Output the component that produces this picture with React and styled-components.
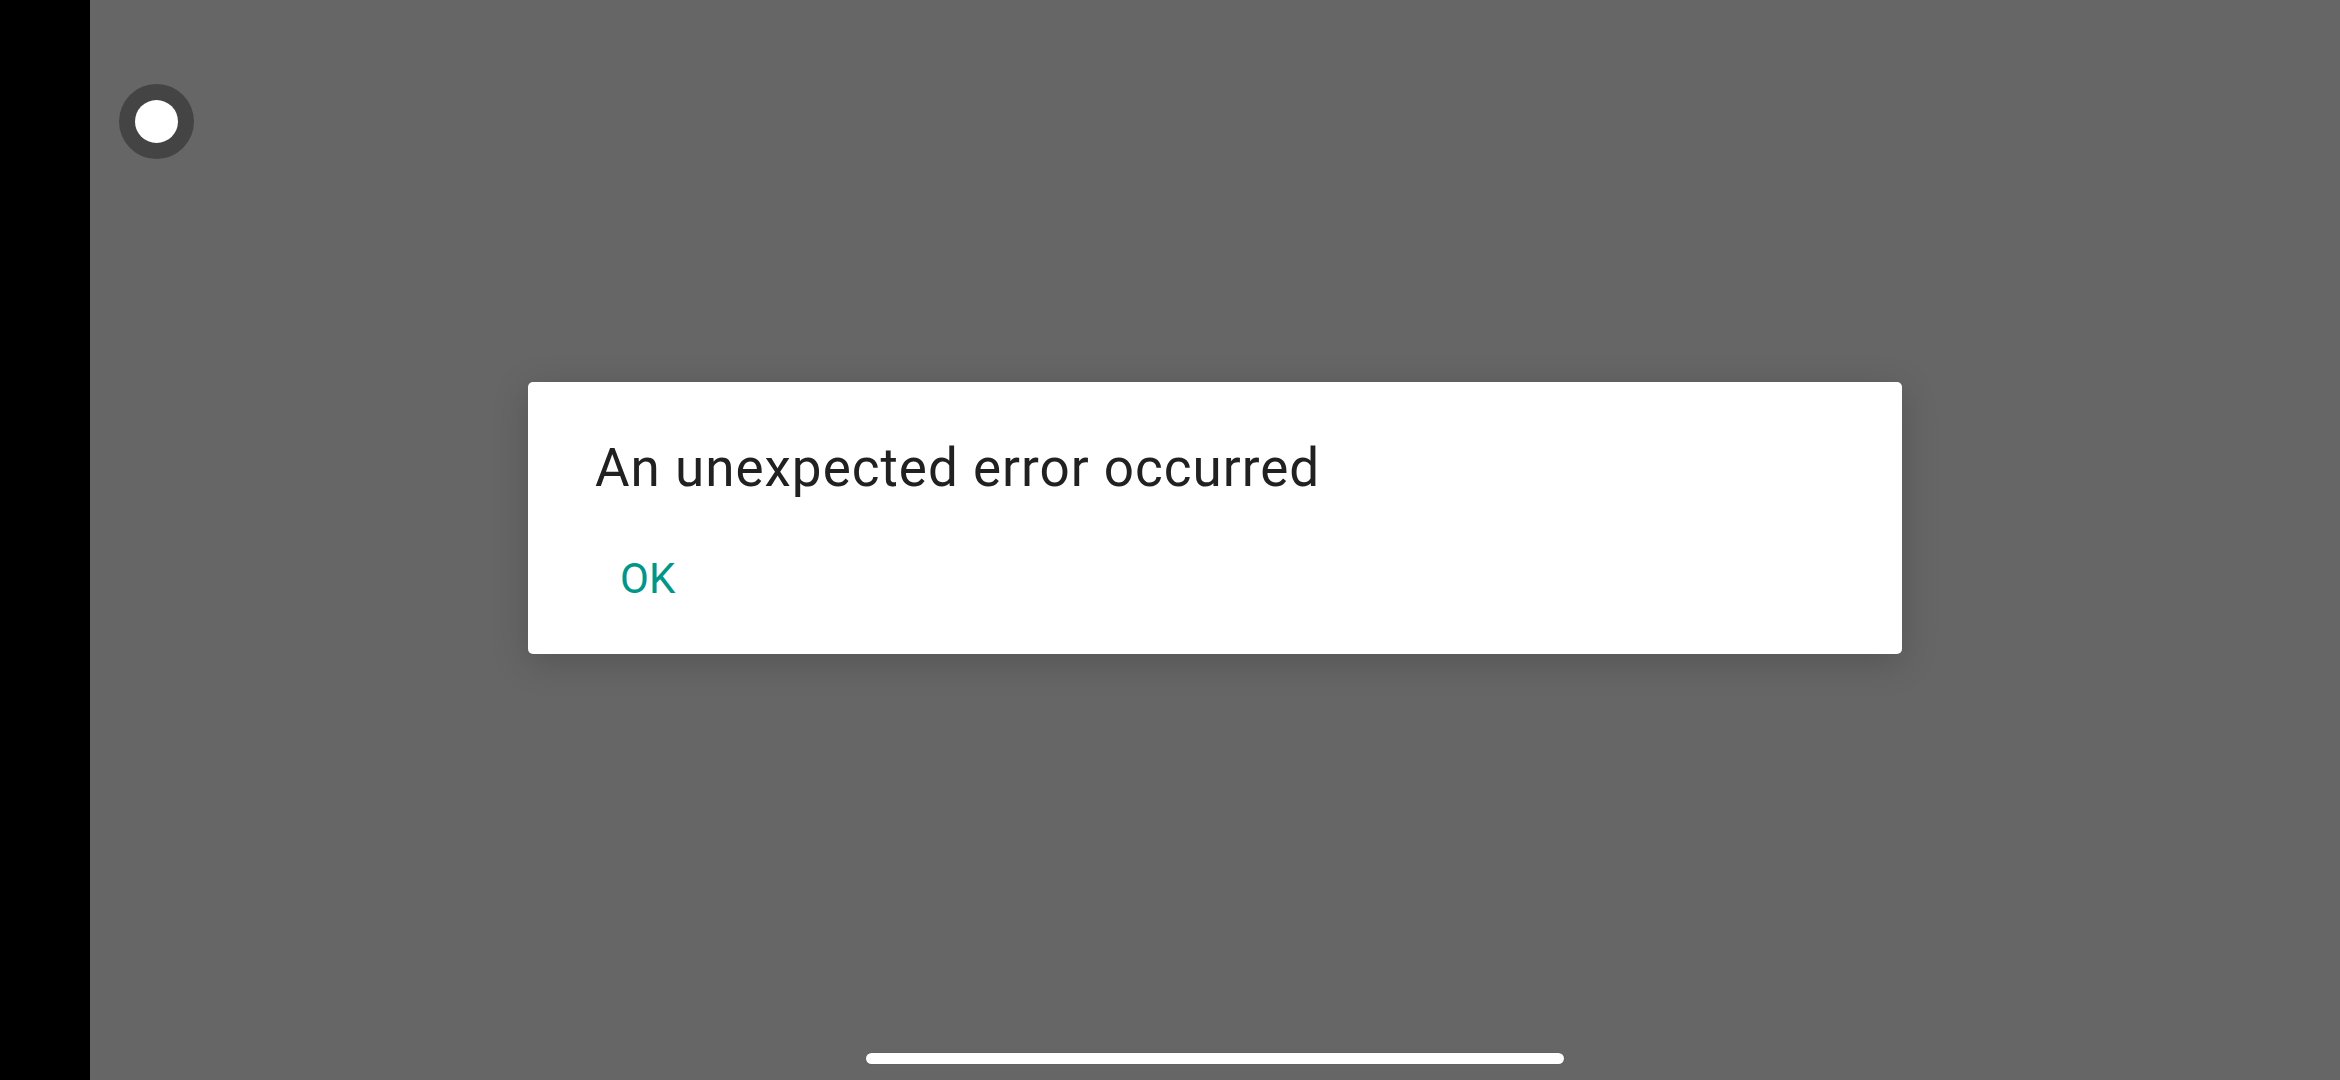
import React from "react";
import styled, { createGlobalStyle } from "styled-components";

const Global = createGlobalStyle`
  html, body { margin: 0; padding: 0; background: #666666; }
  body { font-family: Roboto, "Liberation Sans", sans-serif; }
  #root { width: 2340px; height: 1080px; }
`;

const Screen = styled.div`
  display: flex;
  width: 2340px;
  height: 1080px;
  overflow: hidden;
`;

const SideStrip = styled.div`
  width: 90px;
  flex: none;
  background: #000;
`;

const Content = styled.main`
  position: relative;
  flex: 1;
  display: flex;
  flex-direction: column;
  align-items: center;
  padding-top: 382px;
  background: #666666;
`;

const FloatingBall = styled.div`
  position: absolute;
  left: 29px;
  top: 84px;
  width: 75px;
  height: 75px;
  border-radius: 50%;
  background: #444444;
  display: flex;
  align-items: center;
  justify-content: center;
`;

const BallDot = styled.div`
  width: 43px;
  height: 43px;
  border-radius: 50%;
  background: #ffffff;
`;

const Dialog = styled.div`
  width: 1374px;
  box-sizing: border-box;
  background: #ffffff;
  border-radius: 5px;
  box-shadow: 0 8px 36px rgba(0, 0, 0, 0.18);
  padding: 54px 67px 38px;
  display: flex;
  flex-direction: column;
  gap: 40px;
`;

const Title = styled.h2`
  margin: 0;
  font-family: Roboto, "Liberation Sans", sans-serif;
  font-weight: 400;
  font-size: 53px;
  line-height: 64px;
  letter-spacing: 1px;
  color: #212121;
`;

const Actions = styled.div`
  display: flex;
  justify-content: flex-start;
`;

const TextButton = styled.button`
  border: none;
  background: transparent;
  padding: 14px 25px 12px;
  margin: 0;
  font-family: Roboto, "Liberation Sans", sans-serif;
  font-weight: 400;
  font-size: 42px;
  line-height: 50px;
  color: #009688;
  cursor: pointer;
`;

const GestureBar = styled.div`
  margin-top: auto;
  margin-bottom: 16px;
  width: 698px;
  height: 11px;
  border-radius: 6px;
  background: #ffffff;
  box-shadow: 0 0 1px rgba(0, 0, 0, 0.4);
`;

export default function App() {
  return (
    <>
      <Global />
      <Screen>
        <SideStrip />
        <Content>
          <FloatingBall>
            <BallDot />
          </FloatingBall>
          <Dialog role="alertdialog">
            <Title>An unexpected error occurred</Title>
            <Actions>
              <TextButton>OK</TextButton>
            </Actions>
          </Dialog>
          <GestureBar />
        </Content>
      </Screen>
    </>
  );
}
